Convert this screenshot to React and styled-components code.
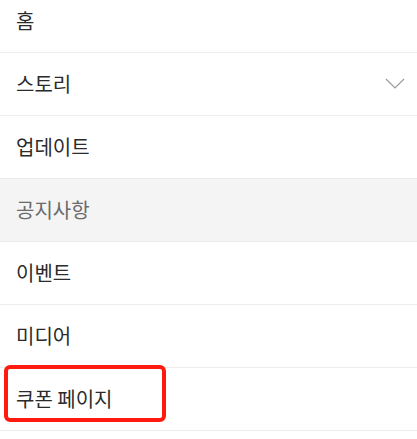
import React from 'react'
import styled, { createGlobalStyle } from 'styled-components'

const items = [
  { label: '홈' },
  { label: '스토리', expandable: true },
  { label: '업데이트' },
  { label: '공지사항', active: true },
  { label: '이벤트' },
  { label: '미디어' },
  { label: '쿠폰 페이지', highlighted: true },
]

const App = () => {
  return (
    <>
      <GlobalStyle />
      <Menu>
        {items.map((item) => (
          <Row key={item.label} $active={item.active}>
            <Label $active={item.active}>{item.label}</Label>
            {item.expandable && (
              <svg width="20" height="11" viewBox="0 0 20 11" fill="none">
                <path d="M1 1l9 9 9-9" stroke="#9a9a9a" strokeWidth="1.2" />
              </svg>
            )}
            {item.highlighted && <Highlight />}
          </Row>
        ))}
      </Menu>
    </>
  )
}

export default App

const GlobalStyle = createGlobalStyle`
    html, body {
        margin: 0;
        padding: 0;
        background: #ffffff;
        overflow: hidden;
    }
    body {
        font-family: 'Noto Sans CJK KR', 'Noto Sans', sans-serif;
    }
`

const Menu = styled.ul`
    list-style: none;
    margin: -10px 0 0 0;
    padding: 0;
    width: 417px;
`

const Row = styled.li`
    position: relative;
    height: 62px;
    display: flex;
    align-items: center;
    justify-content: space-between;
    padding: 0 12px 2px 16px;
    box-sizing: border-box;
    height: 63px;
    border-bottom: 1px solid #ececec;
    background: ${(p) => (p.$active ? '#f4f4f4' : '#ffffff')};
`

const Label = styled.span`
    font-size: 20px;
    color: ${(p) => (p.$active ? '#6a6a6a' : '#2b2b2b')};
    letter-spacing: 0;
`

const Highlight = styled.div`
    position: absolute;
    left: 4px;
    top: -3px;
    width: 154px;
    height: 49px;
    border: 4px solid #ff1a10;
    border-radius: 6px;
`
